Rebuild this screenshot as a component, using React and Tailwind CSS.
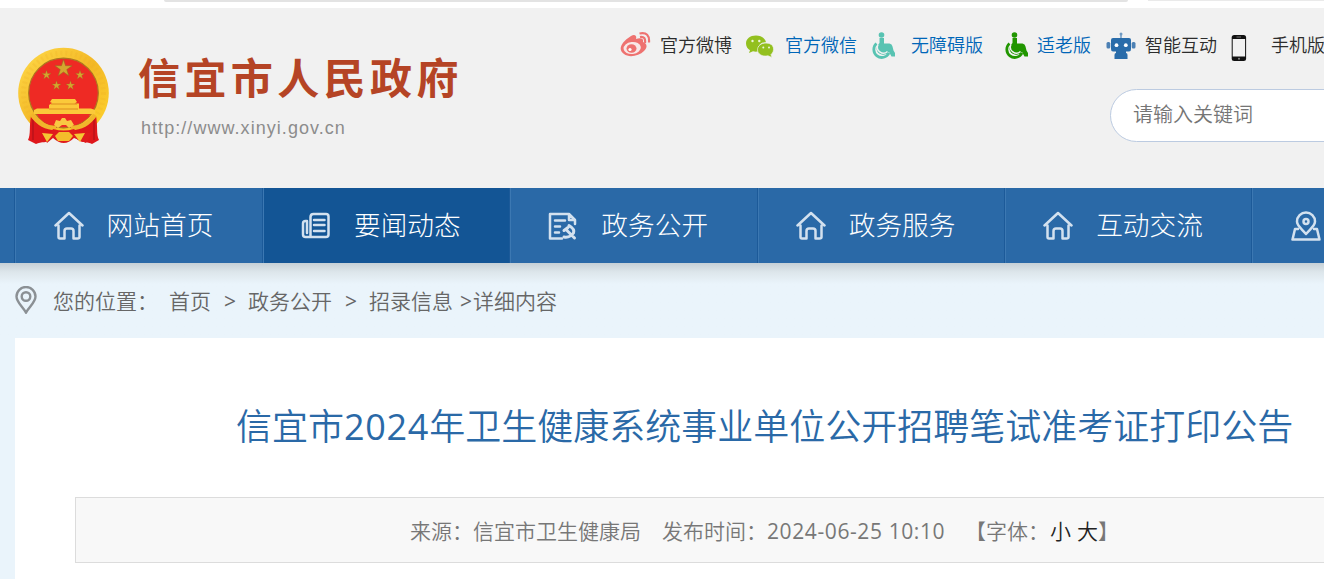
import React from 'react';

const STAR = 'M0 -1 L0.225 -0.309 L0.951 -0.309 L0.363 0.118 L0.588 0.809 L0 0.382 L-0.588 0.809 L-0.363 0.118 L-0.951 -0.309 L-0.225 -0.309 Z';

const Emblem = () => (
  <svg className="w-[92px] h-[98px]" viewBox="0 0 92 98">
    <defs>
      <linearGradient id="gold" x1="0" y1="0" x2="1" y2="1">
        <stop offset="0" stopColor="#ffdb4a" />
        <stop offset="0.5" stopColor="#f3b826" />
        <stop offset="1" stopColor="#ffd52f" />
      </linearGradient>
    </defs>
    <circle cx="45.5" cy="46" r="45.3" fill="url(#gold)" />
    <circle cx="45.5" cy="46" r="40" fill="none" stroke="#eda823" strokeWidth="5" strokeDasharray="2 3" opacity="0.2" />
    <circle cx="45.5" cy="46" r="34.8" fill="#ee2a24" stroke="#ad7620" strokeWidth="1.2" />
    <g fill="#d5a62e" stroke="#8f6f24" strokeWidth="0.06">
      <path d={STAR} transform="translate(45.5 21.5) scale(9)" />
      <path d={STAR} transform="translate(28.5 28) scale(4.8)" />
      <path d={STAR} transform="translate(62 28) scale(4.8)" />
      <path d={STAR} transform="translate(38.5 38.5) scale(4.8)" />
      <path d={STAR} transform="translate(52.5 38.5) scale(4.8)" />
    </g>
    <path d="M34 52 H57 L59 55 L56.500 56.500 H61 V61.500 H73 L77 63 V67 H16 V63 L19 61.500 H31 V58 L34 56 L32 55 Z" fill="#fbc93a" />
    <path d="M33 57 H59 M31 62 H60" stroke="#dc8d20" strokeWidth="1" />
    <path d="M20 69 H72 C66 75 59 78 53 79 L39 79 C30 79 24 75 20 69 Z" fill="#ed2923" />
    <path d="M13 69 C22 78 30 82 37 83 L33 91 C30 97 23 94 18 97 L10 93 C13 87 11 79 13 69 Z" fill="#df171b" />
    <path d="M78 69 C69 78 61 82 55 83 L58 91 C62 97 70 94 74 97 L81 93 C78 87 80 79 78 69 Z" fill="#df171b" />
    <path d="M15 72 V93 M76 72 V93" stroke="#a8101a" strokeWidth="2" opacity="0.5" />
    <path d="M14 68 C21 78 30 81 38 81" fill="none" stroke="#f1b52b" strokeWidth="4" />
    <path d="M77 68 C70 78 61 81 53 81" fill="none" stroke="#f1b52b" strokeWidth="4" />
    <path d="M35 82 Q46 85 56 82 L61 87 L75 85 L68 96 L56 91 Q46 101 35 91 L29 96 L24 85 L32 87 Z" fill="#e01b1d" />
    <path d="M24 86 L35 87 L29 95 Z M67 86 L56 87 L62 95 Z" fill="#f5c633" />
    <path d="M36 78 L38 73 L42 74 L44 71 L47 71 L49 74 L53 73 L56 78 L51 81 L48 78 H44 L40 81 Z" fill="#f9c843" />
    <path d="M37 89 L41 85 L51 85 L55 89 L51 94 H40 Z" fill="#f4bd2b" />
  </svg>
);

const WeiboIcon = () => (
  <svg className="w-[31px] h-[26px]" viewBox="0 0 31 26">
    <path d="M11 4 C15 1.500 17 4 16 7 C20 5.500 24 6 23 10 C27 11.500 28 15 24 19 C19 24 9 26 4 22 C-2 18 0 11 11 4 Z" fill="#ee7270" />
    <ellipse cx="12.200" cy="16" rx="8.700" ry="6" fill="#f8e8e7" transform="rotate(-7 12.200 16)" />
    <ellipse cx="11.500" cy="16.500" rx="5" ry="4.300" fill="#ee7270" />
    <circle cx="10" cy="17.500" r="1.600" fill="#fff" />
    <path d="M20 5 Q26 4 25 11 M19.500 1.500 Q30 -0.500 29 10.500" fill="none" stroke="#ee7270" strokeWidth="2.200" />
  </svg>
);

const WechatIcon = () => (
  <svg className="w-[29px] h-[23px]" viewBox="0 0 29 23">
    <path d="M10 0.500 C4 0.500 0 4 0 8.500 C0 11.500 1.600 13.800 4 15.200 L3 18 L7 16.300 Q10 17 12.500 16.200 C11 11 15 7 20 7.200 C19 3 15 0.500 10 0.500 Z" fill="#93c01f" />
    <path d="M20 8 C15 8 11.500 11 11.500 14.800 C11.500 19 16 22 22 20.800 L26 22.500 L25 19.500 C29 16.500 29 8 20 8 Z" fill="#93c01f" stroke="#f1f1f1" strokeWidth="0.700" />
    <g fill="#eef5dc">
      <circle cx="6.500" cy="6" r="1.200" />
      <circle cx="13.300" cy="6" r="1.200" />
      <circle cx="17.300" cy="12.500" r="1" />
      <circle cx="23" cy="12.500" r="1" />
    </g>
  </svg>
);

const WheelchairIcon = ({ color }) => (
  <svg className="w-[24px] h-[28px]" viewBox="0 0 24 28" fill={color}>
    <circle cx="9.500" cy="3" r="2.800" />
    <path d="M7.500 6 H12 V11.500 H17.500 Q20 12 20.500 14.500 L21.500 18.500 L23 21 V24.500 H19.500 L17 20 A7 7 0 0 1 4.500 17 Q4.500 13.500 7.500 11 Z" />
    <path d="M4.500 11.500 A8 8 0 1 0 17 21" fill="none" stroke={color} strokeWidth="2.800" />
    <path d="M6 12.500 A6 6 0 0 0 15.500 19.500" fill="none" stroke="#f1f1f1" strokeWidth="1.500" />
  </svg>
);

const RobotIcon = () => (
  <svg className="w-[30px] h-[28px]" viewBox="0 0 30 28">
    <circle cx="15" cy="2" r="1.500" fill="#6f9ac3" />
    <path d="M15 2 V7" stroke="#6f9ac3" strokeWidth="1.500" />
    <path d="M7 6 H23 Q25 6 25 8 V17 Q25 19.500 23 19.500 H20 V21 Q21.500 21 21.500 23 V27 H8.500 V23 Q8.500 21 10 21 V19.500 H7 Q5 19.500 5 17 V8 Q5 6 7 6 Z" fill="#296caa" />
    <rect x="0.500" y="10" width="3.800" height="6.500" rx="1.500" fill="#4c80b4" />
    <rect x="25.700" y="10" width="3.800" height="6.500" rx="1.500" fill="#4c80b4" />
    <circle cx="10.500" cy="13.200" r="1.900" fill="#fff" />
    <circle cx="19.800" cy="13.200" r="1.900" fill="#fff" />
  </svg>
);

const PhoneIcon = () => (
  <svg className="w-[16px] h-[28px]" viewBox="0 0 16 28">
    <rect x="0.700" y="1" width="14.400" height="26" rx="2.500" fill="#111" />
    <rect x="1.700" y="5" width="12.400" height="17.500" fill="#f1f1f1" />
    <path d="M5.500 3 H10" stroke="#777" strokeWidth="1" />
    <circle cx="8" cy="24.800" r="1" fill="#888" />
  </svg>
);

const navSvg = {
  className: 'w-[30px] h-[30px] shrink-0',
  viewBox: '0 0 30 30',
  fill: 'none',
  stroke: '#d3e1ef',
  strokeWidth: 2.5,
  strokeLinecap: 'round',
  strokeLinejoin: 'round',
};

const HomeIcon = () => (
  <svg {...navSvg}>
    <path d="M1.500 14.500 L15 2 L28.500 14.500 M4.500 14.500 V26 Q4.500 27.500 6 27.500 H10.500 V20 Q10.500 17.500 13 17.500 H17 Q19.500 17.500 19.500 20 V27.500 H23.500 Q25.500 27.500 25.500 26 V14.500" />
  </svg>
);

const NewsIcon = () => (
  <svg {...navSvg}>
    <path d="M9.500 25.500 V6 Q9.500 3 12.500 3 H25 Q27.500 3 27.500 5.500 V23.500 Q27.500 26 25 26 H4.500 Q2 26 2 23.500 V12.500 Q2 10 4.500 10 H6 V22 M13 9 H23.500 M13 14 H23.500 M13 20 H23.500" />
  </svg>
);

const DocIcon = () => (
  <svg {...navSvg}>
    <path d="M14 27.500 H2 V3 H21 L27 9 V13 M21 3 V9 H27 M7 9.500 H17 M7 15.500 H12 M7 21.500 H11" />
    <path d="M21 14.500 Q27 18 25.500 22 Q22 27 16 26 M16 19.500 L20 16.500 M18.500 19 L26.500 27" strokeWidth="3" />
  </svg>
);

const MapIcon = () => (
  <svg {...navSvg}>
    <path d="M15 23 C11 18 6 15 6 10.500 A9 9 0 0 1 24 10.500 C24 15 19 18 15 23 Z M7 18 H4 L1.500 28.500 H28.500 L26 18 H23" />
    <circle cx="15" cy="10.500" r="2.500" />
  </svg>
);

const PinIcon = () => (
  <svg className="w-[22px] h-[28px]" viewBox="0 0 22 28" fill="none" stroke="#8b9094" strokeWidth="2.400">
    <path d="M11 26.500 C7 20 1.500 16 1.500 10.500 A9.500 9.500 0 0 1 20.500 10.500 C20.500 16 15 20 11 26.500 Z" />
    <circle cx="11" cy="10.500" r="4.300" />
  </svg>
);

const navItems = [
  { label: '网站首页', Icon: HomeIcon },
  { label: '要闻动态', Icon: NewsIcon, active: true },
  { label: '政务公开', Icon: DocIcon },
  { label: '政务服务', Icon: HomeIcon },
  { label: '互动交流', Icon: HomeIcon },
  { label: '', Icon: MapIcon },
];

const TopLinks = () => (
  <div className="flex h-[28px] text-[18px] leading-[27px] text-[#2c2c2c]">
    <div className="w-[126px] flex gap-[9px]">
      <WeiboIcon />
      <span>官方微博</span>
    </div>
    <div className="w-[126px] flex gap-[10px] text-[#0066b8]">
      <span className="pt-[3px]"><WechatIcon /></span>
      <span>官方微信</span>
    </div>
    <div className="w-[133px] flex gap-[15px] text-[#0066b8]">
      <WheelchairIcon color="#58c3b2" />
      <span>无障碍版</span>
    </div>
    <div className="w-[101px] flex gap-[8px] text-[#0066b8]">
      <WheelchairIcon color="#219600" />
      <span>适老版</span>
    </div>
    <div className="w-[125px] flex gap-[9px]">
      <RobotIcon />
      <span>智能互动</span>
    </div>
    <div className="flex gap-[24px]">
      <span className="pt-[2px]"><PhoneIcon /></span>
      <span>手机版</span>
    </div>
  </div>
);

const App = () => {
  return (
    <div className="w-[1324px] h-[579px] overflow-hidden whitespace-nowrap bg-[#eaf4fb] font-[350] font-['Open_Sans','Noto_Sans_CJK_SC',sans-serif]">
      <div className="h-2 bg-white flex items-start">
        <div className="ml-[164px] w-[964px] h-[2px] rounded-b bg-[#e3e3e3]" />
        <div className="ml-5 w-[176px] h-px bg-[#eaeaea]" />
      </div>

      {/* Header */}
      <header className="h-[180px] bg-[#f1f1f1] flex">
        <div className="w-[620px] shrink-0 flex pl-[18px] pt-[39px]">
          <Emblem />
          <div className="ml-[28px] pt-[6px]">
            <h1 className="text-[42px] leading-[50px] tracking-[4.400px] font-bold text-[#b54425]">信宜市人民政府</h1>
            <p className="pl-[3px] mt-[12px] text-[18px] leading-[26px] tracking-[1.050px] font-normal text-[#8c8c8c] font-['Liberation_Sans',sans-serif]">http://www.xinyi.gov.cn</p>
          </div>
        </div>
        <div className="shrink-0 pt-[24px]">
          <TopLinks />
          <div className="ml-[490px] mt-[29px] w-[300px] h-[53px] rounded-full border border-[#bccbe1] bg-white pl-[22px] text-[20px] leading-[50px] text-[#757575]">
            请输入关键词
          </div>
        </div>
      </header>

      <nav className="h-[75px] bg-[#2a69a7] pl-[14.400px] flex">
        {navItems.map(({ label, Icon, active }, index) => (
          <div
            key={index}
            className={`w-[247.400px] shrink-0 h-full border-l border-[#1c5a99] shadow-[inset_1px_0_0_#3c78b2] flex items-center pl-[38.200px] ${active ? 'bg-[#135595]' : ''}`}
          >
            <Icon />
            <span className="ml-[23px] mb-[2px] text-[26.700px] leading-[40px] font-light text-white">{label}</span>
          </div>
        ))}
      </nav>

      <div className="h-[75px] bg-linear-to-b from-[#c6d0d6] from-0% via-[#dde6eb] via-12% to-[#eaf4fb] to-28% flex pl-[15px] pt-[23px] text-[21px] leading-[30px] text-[#666]">
        <PinIcon />
        <span className="ml-[16px] w-[116px]">您的位置：</span>
        <span className="w-[54px]">首页</span>
        <span className="w-[25px] pl-px font-normal">&gt;</span>
        <span className="w-[96px]">政务公开</span>
        <span className="w-[25px] pl-px font-normal">&gt;</span>
        <span className="w-[91px]">招录信息</span>
        <span className="w-[13px] font-normal">&gt;</span>
        <span>详细内容</span>
      </div>

      {/* Article */}
      <main className="ml-[15px] h-[241px] bg-white pt-[62px]">
        <h2 className="pl-[221px] text-[36px] leading-[54px] text-[#2a69a7]">
          信宜市<span className="font-normal tracking-[0.700px]">2024</span>年卫生健康系统事业单位公开招聘笔试准考证打印公告
        </h2>
        <div className="ml-[60px] mt-[43px] w-[1300px] h-[66px] border border-[#dcdcdc] bg-[#f8f8f8] flex pl-[334px] text-[21px] leading-[66px] text-[#777]">
          <span className="w-[252px]">来源：信宜市卫生健康局</span>
          <span className="w-[105px]">发布时间：</span>
          <span className="w-[198px] font-normal tracking-[0.600px]">2024-06-25 10:10</span>
          <span className="w-[85px]">【字体：</span>
          <span className="text-[#222] w-[27px]">小</span>
          <span className="text-[#222]">大</span>
          <span>】</span>
        </div>
      </main>
    </div>
  );
};

export default App;
